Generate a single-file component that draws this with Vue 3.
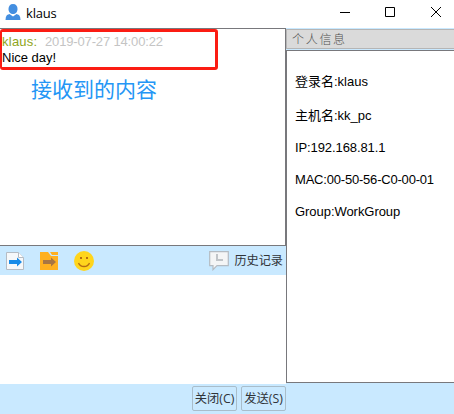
<script setup>
const details = [
  { label: '登录名', value: 'klaus', kind: 'cjk' },
  { label: '主机名', value: 'kk_pc', kind: 'cjk' },
  { label: 'IP', value: '192.168.81.1', kind: 'ip' },
  { label: 'MAC', value: '00-50-56-C0-00-01', kind: 'mac' },
  { label: 'Group', value: 'WorkGroup', kind: 'group' }
]
</script>

<template>
  <div class="window">
    <header class="titlebar">
      <svg class="avatar" width="16" height="17" viewBox="0 0 16 17">
        <path d="M8 0C5 0 3.500 2 3.500 5S5.500 10 8 10s4.500-2 4.500-5S11 0 8 0z" fill="#438ee0" />
        <path d="M4.500 10 8 12.500l3.500-2.500 2.500 1q1.500 1.500 1.500 5H.5q0-3.500 1.500-5z" fill="#438ee0" />
      </svg>
      <span class="title">klaus</span>
      <svg class="controls" width="104" height="12" viewBox="0 0 104 12" fill="none" stroke="#000" stroke-width="1">
        <path d="M0 6.500h10" />
        <path d="M45.500 1.500h9v9h-9z" />
        <path d="M91 1l10 10M101 1l-10 10" />
      </svg>
    </header>

    <div class="body">
      <main class="chat">
        <section class="messages">
          <div class="message">
            <p><span class="sender">klaus:</span><span class="time">2019-07-27 14:00:22</span></p>
            <p class="text">Nice day!</p>
          </div>
          <p class="note">接收到的内容</p>
        </section>
        <nav class="toolbar">
          <svg width="18" height="18" viewBox="0 0 18 18">
            <path d="M.5.5h12l5 5v12H.5z" fill="#f6f8fa" stroke="#b5bcc4" />
            <path d="M12.500.5v5h5" fill="#fff" stroke="#b5bcc4" />
            <path d="M3 8h8V5.500l5 4.500-5 4.500V12H3z" fill="#188be8" />
          </svg>
          <svg width="18" height="18" viewBox="0 0 18 18">
            <path d="M0 0h8l3 4h7v14H0z" fill="#ffb020" />
            <path d="M10 0h8v3h-6z" fill="#ffb020" />
            <path d="M3 8h8V5.500l5 4.500-5 4.500V12H3z" fill="#a87543" />
          </svg>
          <svg width="20" height="20" viewBox="0 0 20 20">
            <circle cx="10" cy="10" r="10" fill="#ffd51c" />
            <path d="M6 6h2v2H6zm6 0h2v2h-2z" fill="#b66d12" />
            <path d="M4.500 12q1.500 3.500 5.500 3.500t5.500-3.500" fill="none" stroke="#b66d12" stroke-width="1.300" />
          </svg>
          <button class="history">
            <svg width="20" height="20" viewBox="0 0 20 20">
              <path d="M.7.7h18.600v14H8l-4 4v-4H.7z" fill="#f4f5f6" stroke="#b4bbc2" stroke-width="1.200" />
              <path d="M8 3v6h6" fill="none" stroke="#c0c4c8" stroke-width="2" />
            </svg>
            <span>历史记录</span>
          </button>
        </nav>
        <section class="editor"></section>
      </main>

      <aside class="profile">
        <h2>个人信息</h2>
        <div class="details">
          <p v-for="item in details" :key="item.label" :class="item.kind">{{ item.label }}:{{ item.value }}</p>
        </div>
      </aside>
    </div>

    <footer class="actions">
      <button>关闭(C)</button>
      <button>发送(S)</button>
    </footer>
  </div>
</template>

<style>
body { margin: 0; overflow: hidden; }
</style>

<style scoped>
* { box-sizing: border-box; }
p, h2 { margin: 0; font-weight: normal; white-space: nowrap; }
svg { display: block; flex: none; }
button { margin: 0; padding: 0; border: 0; background: none; color: #303438; font: 13px/18px "Open Sans", "Noto Sans CJK SC", sans-serif; white-space: nowrap; }
.window { display: flex; flex-direction: column; width: 454px; height: 414px; overflow: hidden; background: #c9e9ff; color: #000; font: 13px/16px "Liberation Sans", "Noto Sans CJK SC", sans-serif; }
.titlebar { display: flex; flex: none; height: 28px; background: #fff; }
.avatar { margin: 4px 0 0 5px; }
.title { margin: 4px 0 0 5px; font: 13px/18px "Open Sans", sans-serif; letter-spacing: -.2px; }
.controls { margin: 6px 10px 0 auto; }
.body { display: flex; height: 356px; }
.chat { display: flex; flex-direction: column; width: 286px; }
.messages { height: 218px; border: solid #78787c; border-width: 1px 1px 1px 0; background: #fff; }
.message { width: 218px; height: 41px; padding: 2px 0 0; border: 3px solid #fb1c13; border-left-width: 2px; border-radius: 3px; }
.message p { height: 16px; }
.sender { display: inline-block; width: 43px; color: #8fa51a; letter-spacing: .25px; }
.time { color: #c4c4c4; letter-spacing: -.15px; }
.note { margin: 3px 0 0 31px; color: #2496f5; font: 21px/30px "Noto Sans CJK SC", sans-serif; }
.toolbar { display: flex; align-items: center; height: 29px; padding: 0 4px 0 6px; gap: 16px; }
.history { display: flex; align-items: center; gap: 5px; margin: 0 -1px 0 auto; font-size: 12.15px; }
.history span { padding-top: 1px; }
.editor { flex: 1; background: #fff; }
.profile { display: flex; flex-direction: column; width: 168px; height: 355px; }
.profile h2 { height: 20px; margin: 1px 0; padding-left: 5px; border: solid #b5b5b5; border-width: 1px 0 1px 1px; background: #dadada; color: #505050; font: 300 12px/18px "Noto Sans CJK SC", sans-serif; letter-spacing: 1.7px; }
.details { display: flex; flex-direction: column; flex: 1; gap: 16px; padding: 21px 0 0 8px; border: solid #78787c; border-width: 1px 0 1px 1px; background: #fff; }
.details p { height: 16px; }
.details .cjk { height: 18px; line-height: 20px; }
.details .ip { letter-spacing: -.1px; }
.details .mac { letter-spacing: -.2px; }
.details .group { letter-spacing: -.05px; }
.actions { display: flex; gap: 4px; height: 30px; padding: 2px 0 0 192px; }
.actions button { width: 45px; height: 25px; border: 1px solid #a9bdca; border-radius: 2px; font-size: 12.3px; line-height: 23px; }
</style>
